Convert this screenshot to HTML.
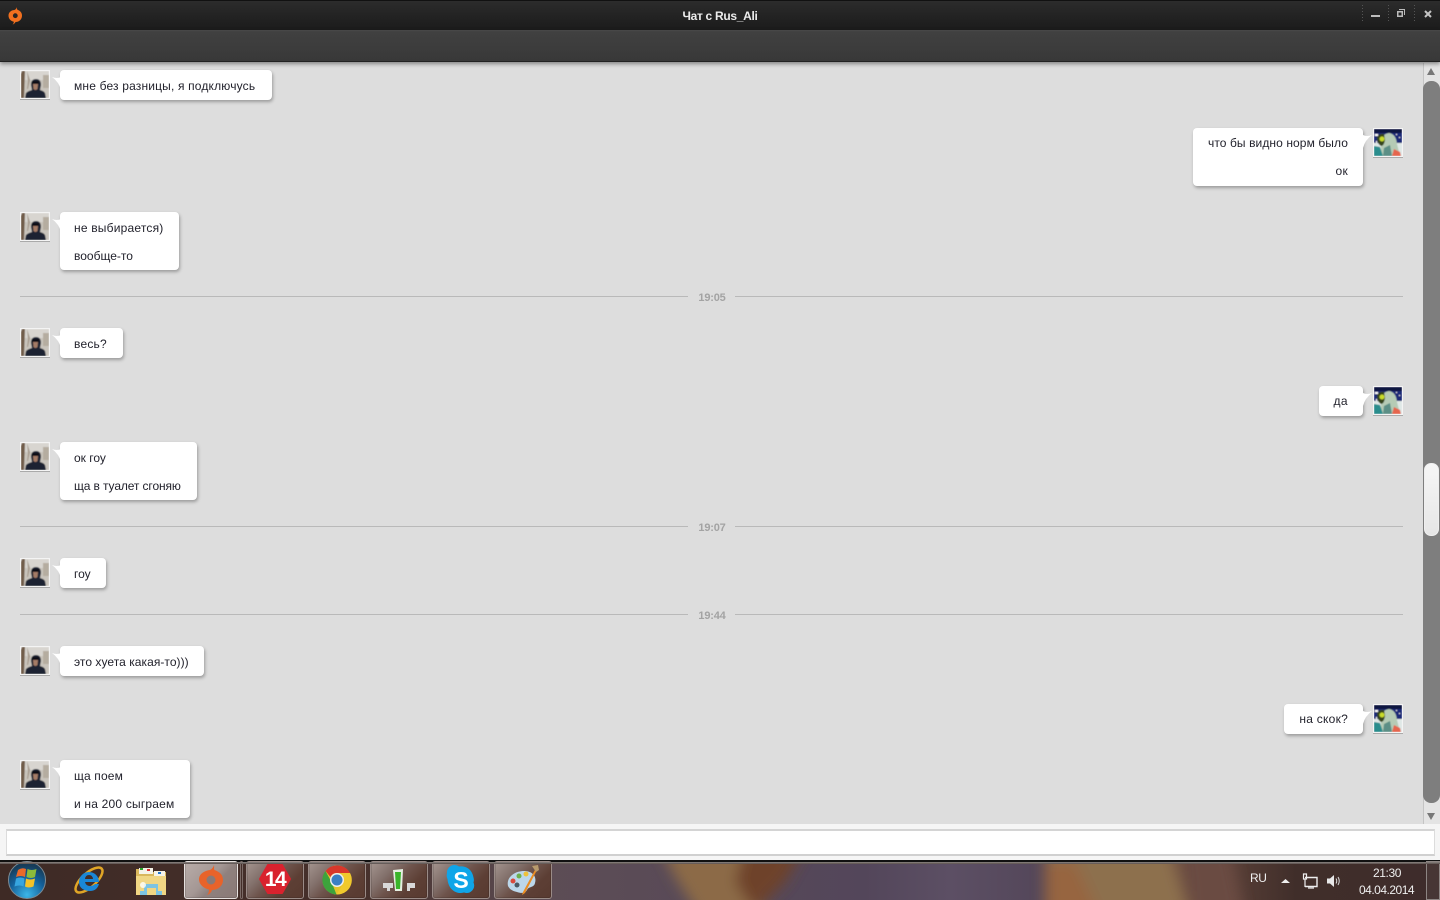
<!DOCTYPE html>
<html lang="ru"><head><meta charset="utf-8"><title>Чат с Rus_Ali</title>
<style>
html,body{margin:0;padding:0;width:1440px;height:900px;overflow:hidden;background:#dddddd;font-family:"Liberation Sans",Arial,sans-serif}
*{box-sizing:border-box}
.a{position:absolute}
#title{left:0;top:0;width:1440px;height:30px;background:linear-gradient(#2c2c2c 0,#2a2a2a 10%,#1b1b1b 100%);border-top:1px solid #111}
#ttl{left:0;width:1440px;top:9px;text-align:center;color:#ececec;font-size:12px;font-weight:bold;line-height:14px;letter-spacing:-.3px}
#tool{left:0;top:30px;width:1440px;height:32px;background:linear-gradient(#4a4a4a 0,#404040 2px,#3c3c3c 60%,#383838 100%);border-bottom:1px solid #222;box-shadow:0 2px 4px rgba(0,0,0,.4);z-index:5}
.dot{top:5px;width:1px;height:17px;background:repeating-linear-gradient(#555 0,#555 1px,transparent 1px,transparent 3px)}
.b{position:absolute;background:#fff;border-radius:4px;box-shadow:1px 2px 3px rgba(0,0,0,.3);font-size:12px;color:#22222c;line-height:14px}
.b div{position:absolute;white-space:nowrap}
.l div{left:14px}
.r div{right:15px}
.av{position:absolute;width:30px;height:30px;padding:1px 1px 0;background:#f4f4f4;box-shadow:inset 0 -1px 0 #aaa;overflow:hidden}
.av svg{display:block}
.tail{position:absolute;width:11px;height:18px;z-index:1}
.ln{position:absolute;height:1px;background:#b9b9b9}
.tm{position:absolute;left:690px;width:44px;text-align:center;font-size:11px;font-weight:bold;color:#a3a3a3;line-height:13px;letter-spacing:-.2px}
#tb{left:0;top:860px;width:1440px;height:40px;border-top:2px solid #111;overflow:hidden;background:#3f2c27}
#tb:before{content:"";position:absolute;left:0;top:0;width:1440px;height:2px;background:linear-gradient(#8c8683,#5a4e4b);z-index:2}
.tbtn{position:absolute;top:861px;height:38px;border:1px solid #9a8b87;border-radius:3px;background:linear-gradient(135deg,#a4958f 0,#82706b 30%,#6e544c 48%,#5d3f35 70%,#583a30 100%);box-shadow:inset 0 0 0 1px rgba(0,0,0,.12)}
.tbtn svg,.ic{position:absolute}
.tx{position:absolute;color:#efefef;font-size:12px;line-height:14px;white-space:nowrap;letter-spacing:-.4px}
</style></head><body>
<svg width="0" height="0" style="position:absolute"><defs>
<filter id="bl"><feGaussianBlur stdDeviation=".45"/></filter>
<symbol id="g" viewBox="0 0 28 27" preserveAspectRatio="none"><g filter="url(#bl)">
<rect width="28" height="27" fill="#c9c4bc"/><rect width="28" height="9" fill="#d8d5d0"/>
<path d="M1 0h3L3 27H0V3z" fill="#6f5b48"/><path d="M6 0l1 10-1 8h1l2-9z" fill="#a59a8c"/><rect x="22" y="4" width="6" height="13" fill="#b5ada0"/>
<path d="M4 27l1-5q2-2 6-3l-1-5q0-6 5-6 5 0 5 6l-1 5q4 1 5 3l1 5z" fill="#1d2433"/>
<path d="M12 13q2-2 5 0l-.5 5q-2 2-4 0z" fill="#a57c66"/><rect x="11" y="10" width="7" height="3" fill="#0f1119"/>
</g></symbol>
<symbol id="m" viewBox="0 0 28 27" preserveAspectRatio="none"><g filter="url(#bl)">
<rect width="28" height="27" fill="#1d2a78"/><rect width="28" height="4" fill="#0e1440"/>
<path d="M0 14h28v13H0z" fill="#dfe8e6"/><path d="M7 27V12q1-7 8-8 7 1 8 11l3 12z" fill="#b5cbb5"/>
<path d="M3 8q3-4 7-3l1 6q-1 6-4 6-4-2-4-9z" fill="#36451a"/><circle cx="8" cy="10" r="2.500" fill="#c8dc2a"/>
<path d="M0 17l6 1 3 9H0z" fill="#2b8d8d"/><path d="M20 20l6 3 1 4h-9z" fill="#e5654d"/><path d="M10 19l6-3 2 11H9z" fill="#5b8f86"/>
<rect x="1" y="5" width="3" height="2" fill="#fff"/><rect x="22" y="5" width="1" height="1" fill="#fff"/><rect x="25" y="8" width="1" height="1" fill="#fff"/><rect x="2" y="12" width="1" height="2" fill="#fff"/>
</g></symbol>
</defs></svg>

<div class="a" id="title"></div>
<svg class="ic" style="left:7px;top:6px;z-index:6" width="16" height="19" viewBox="0 0 16 19"><path d="M10 1c0 1.500-.2 2 .5 2.800C13.500 5 15 7 15 9.700c0 3.600-3 6.300-6.500 6.300-.5 1.200-1.500 2-3 2.500 1-.8 1.300-1.600 1.300-2.700C3.500 15 1.500 12.500 1.500 9.500 1.500 5.500 5.500 4 7.500 4 8.700 3.500 9.700 2.300 10 1z" fill="#f2701f"/><circle cx="8.300" cy="9.700" r="2.400" fill="#2a2420"/></svg>
<div class="a" id="ttl">Чат с Rus_Ali</div>
<div class="a dot" style="left:1362px"></div><div class="a dot" style="left:1388px"></div><div class="a dot" style="left:1414px"></div>
<div class="a" style="left:1371px;top:15px;width:9px;height:2px;background:#bdbdbd"></div>
<svg class="ic" style="left:1397px;top:9px" width="8" height="8" viewBox="0 0 8 8"><path d="M2 0h6v6H7V1H2z" fill="#bbb"/><path d="M0 2h6v6H0zM1.500 3.500v3h3v-3z" fill="#bbb" fill-rule="evenodd"/></svg>
<svg class="ic" style="left:1424px;top:10px" width="8" height="8" viewBox="0 0 8 8"><path d="M1 1l6 6M7 1L1 7" stroke="#c4c4c4" stroke-width="2"/></svg>
<div class="a" id="tool"></div>

<div class="av" style="left:20px;top:70px"><svg width="28" height="27"><use href="#g"/></svg></div>
<svg class="tail" style="left:50px;top:74px" viewBox="0 0 11 18"><path d="M2 3Q7 5 11 3V16Q9 8 2 3z" fill="#fff"/></svg>
<div class="b l" style="left:60px;top:70px;width:212px;height:30px"><div style="top:9px;letter-spacing:.17px">мне без разницы, я подключусь</div></div>

<div class="b r" style="left:1193px;top:128px;width:170px;height:58px"><div style="top:8px;letter-spacing:.09px">что бы видно норм было</div><div style="top:36px;letter-spacing:.3px">ок</div></div>
<svg class="tail" style="left:1363px;top:132px" viewBox="0 0 11 18"><path d="M9 3Q4 5 0 3V16Q2 8 9 3z" fill="#fff"/></svg>
<div class="av" style="left:1373px;top:128px"><svg width="28" height="27"><use href="#m"/></svg></div>

<div class="av" style="left:20px;top:212px"><svg width="28" height="27"><use href="#g"/></svg></div>
<svg class="tail" style="left:50px;top:216px" viewBox="0 0 11 18"><path d="M2 3Q7 5 11 3V16Q9 8 2 3z" fill="#fff"/></svg>
<div class="b l" style="left:60px;top:212px;width:119px;height:58px"><div style="top:9px;letter-spacing:.2px">не выбирается)</div><div style="top:37px">вообще-то</div></div>

<div class="ln" style="left:20px;top:296px;width:668px"></div><div class="tm" style="top:292px">19:05</div><div class="ln" style="left:735px;top:296px;width:668px"></div>

<div class="av" style="left:20px;top:328px"><svg width="28" height="27"><use href="#g"/></svg></div>
<svg class="tail" style="left:50px;top:332px" viewBox="0 0 11 18"><path d="M2 3Q7 5 11 3V16Q9 8 2 3z" fill="#fff"/></svg>
<div class="b l" style="left:60px;top:328px;width:63px;height:30px"><div style="top:9px;letter-spacing:.2px">весь?</div></div>

<div class="b r" style="left:1319px;top:386px;width:44px;height:30px"><div style="top:8px;letter-spacing:.4px">да</div></div>
<svg class="tail" style="left:1363px;top:390px" viewBox="0 0 11 18"><path d="M9 3Q4 5 0 3V16Q2 8 9 3z" fill="#fff"/></svg>
<div class="av" style="left:1373px;top:386px"><svg width="28" height="27"><use href="#m"/></svg></div>

<div class="av" style="left:20px;top:442px"><svg width="28" height="27"><use href="#g"/></svg></div>
<svg class="tail" style="left:50px;top:446px" viewBox="0 0 11 18"><path d="M2 3Q7 5 11 3V16Q9 8 2 3z" fill="#fff"/></svg>
<div class="b l" style="left:60px;top:442px;width:137px;height:58px"><div style="top:9px">ок гоу</div><div style="top:37px;letter-spacing:-.11px">ща в туалет сгоняю</div></div>

<div class="ln" style="left:20px;top:526px;width:668px"></div><div class="tm" style="top:522px">19:07</div><div class="ln" style="left:735px;top:526px;width:668px"></div>

<div class="av" style="left:20px;top:558px"><svg width="28" height="27"><use href="#g"/></svg></div>
<svg class="tail" style="left:50px;top:562px" viewBox="0 0 11 18"><path d="M2 3Q7 5 11 3V16Q9 8 2 3z" fill="#fff"/></svg>
<div class="b l" style="left:60px;top:558px;width:46px;height:30px"><div style="top:9px">гоу</div></div>

<div class="ln" style="left:20px;top:614px;width:668px"></div><div class="tm" style="top:610px">19:44</div><div class="ln" style="left:735px;top:614px;width:668px"></div>

<div class="av" style="left:20px;top:646px"><svg width="28" height="27"><use href="#g"/></svg></div>
<svg class="tail" style="left:50px;top:650px" viewBox="0 0 11 18"><path d="M2 3Q7 5 11 3V16Q9 8 2 3z" fill="#fff"/></svg>
<div class="b l" style="left:60px;top:646px;width:144px;height:30px"><div style="top:9px;letter-spacing:.05px">это хуета какая-то)))</div></div>

<div class="b r" style="left:1284px;top:704px;width:79px;height:30px"><div style="top:8px;letter-spacing:.25px">на скок?</div></div>
<svg class="tail" style="left:1363px;top:708px" viewBox="0 0 11 18"><path d="M9 3Q4 5 0 3V16Q2 8 9 3z" fill="#fff"/></svg>
<div class="av" style="left:1373px;top:704px"><svg width="28" height="27"><use href="#m"/></svg></div>

<div class="av" style="left:20px;top:760px"><svg width="28" height="27"><use href="#g"/></svg></div>
<svg class="tail" style="left:50px;top:764px" viewBox="0 0 11 18"><path d="M2 3Q7 5 11 3V16Q9 8 2 3z" fill="#fff"/></svg>
<div class="b l" style="left:60px;top:760px;width:130px;height:58px"><div style="top:9px;letter-spacing:.14px">ща поем</div><div style="top:37px;letter-spacing:.2px">и на 200 сыграем</div></div>

<!-- scrollbar -->
<div class="a" style="left:1423px;top:63px;width:17px;height:761px;background:#e4e4e4;border-left:1px solid #c4c4c4"></div>
<svg class="ic" style="left:1427px;top:68px" width="8" height="7"><path d="M4 0l4 7H0z" fill="#777"/></svg>
<svg class="ic" style="left:1427px;top:813px" width="8" height="7"><path d="M4 7l4-7H0z" fill="#777"/></svg>
<div class="a" style="left:1423px;top:81px;width:17px;height:722px;background:#7e7e7e;border-radius:8px"></div>
<div class="a" style="left:1424px;top:463px;width:15px;height:73px;background:linear-gradient(#f6f6f6,#e6e6e6);border-radius:7px;border:1px solid #efefef"></div>

<!-- input area -->
<div class="a" style="left:0;top:824px;width:1440px;height:36px;background:#f5f5f5"></div>
<div class="a" style="left:6px;top:829px;width:1429px;height:27px;background:#fff;border:1px solid #dcdcdc;border-top:2px solid #d4d4d4;border-bottom:2px solid #d0d0d0"></div>

<!-- taskbar -->
<div class="a" id="tb">
<svg width="1440" height="38" style="position:absolute;left:0;top:0"><defs><filter id="w" filterUnits="userSpaceOnUse" x="500" y="-40" width="940" height="120"><feGaussianBlur stdDeviation="7"/></filter><linearGradient id="tbbg" x1="0" x2="1"><stop offset="0" stop-color="#3e2a25"/><stop offset=".25" stop-color="#46302b"/><stop offset=".38" stop-color="#5d4d55"/><stop offset=".6" stop-color="#53465a"/><stop offset=".66" stop-color="#5c4f64"/><stop offset=".72" stop-color="#54475a"/><stop offset=".82" stop-color="#6a4b40"/><stop offset=".9" stop-color="#402e2a"/><stop offset="1" stop-color="#3e2c2b"/></linearGradient></defs>
<rect width="1440" height="38" fill="url(#tbbg)"/>
<g filter="url(#w)"><path d="M660 -15h95l-15 30 30 40h-70l-25-40z" fill="#8c6a46"/><path d="M745 -15h60l-20 35-30 30-20-30z" fill="#6e4329"/>
<path d="M1045 -15h125l20 70h-145z" fill="#8d6f4e"/><path d="M1045 0h30l25 55h-55z" fill="#97653f"/><path d="M1180 -15h50l15 70h-55z" fill="#6b4b42"/></g>
</svg>
</div>
<svg class="ic" style="left:8px;top:861px" width="38" height="38" viewBox="0 0 38 38"><defs><radialGradient id="o" cx=".5" cy=".9" r=".8"><stop offset="0" stop-color="#3cb6e8"/><stop offset=".6" stop-color="#14609a"/><stop offset="1" stop-color="#173c58"/></radialGradient></defs><circle cx="19" cy="19" r="18.500" fill="url(#o)" stroke="#7c8a93" stroke-width="1"/><path d="M10 9q4-3 8-1l-1 8q-4-2-9 0z" fill="#ea6a2a"/><path d="M19.500 8q4 2 9 0l-1.500 8q-4 2-8.500 0z" fill="#8cbb3a"/><path d="M8 17.500q4-2 8.500 0l-1 8q-4-2-9 0z" fill="#37a5df"/><path d="M18 17.500q4 2 9 0l-1.500 8q-5 2-8.500 0z" fill="#f5c227"/></svg>
<svg class="ic" style="left:72px;top:863px" width="34" height="34" viewBox="0 0 34 34"><ellipse cx="17" cy="17" rx="17" ry="7" transform="rotate(-42 17 17)" fill="none" stroke="#e0a526" stroke-width="2.500"/><path d="M7 19a10 10 0 1 1 20 0H13q1 4 5 4 3 0 5-2h4q-2 7-9 7C12 28 7 25 7 19zm6-3h8q-.5-4-4-4t-4 4z" fill="#1a87d6" fill-rule="evenodd"/></svg>
<svg class="ic" style="left:134px;top:866px" width="34" height="30" viewBox="0 0 34 30"><path d="M2 3h13l2 3h15v23H2z" fill="#d9b75c"/><rect x="5" y="2" width="14" height="6" fill="#f5f3e8"/><rect x="20" y="5" width="11" height="5" fill="#f5f3e8"/><rect x="6" y="2" width="3" height="2" fill="#2aa52a"/><rect x="13" y="3" width="3" height="2" fill="#d33"/><rect x="24" y="6" width="3" height="2" fill="#2277cc"/><path d="M2 10h30v19H2z" fill="#f0d684"/><path d="M10 25v-7h14v7h4v4h-6v-7H13v7H6v-4z" fill="#7cc3e2"/><circle cx="9" cy="19" r="3" fill="#fff" opacity=".8"/></svg>
<div class="tbtn" style="left:184px;width:54px;background:linear-gradient(135deg,#b9ada9 0,#a49794 45%,#8f817e 60%,#8a7976 100%);border-color:#e6e0de"></div>
<div class="a" style="left:240px;top:861px;width:3px;height:38px;border:1px solid #7a6a66;border-radius:2px"></div>
<svg class="ic" style="left:198px;top:864px" width="26" height="32" viewBox="0 0 26 32"><path d="M16 1c.5 2.500-.5 3.500.5 5C22 8 25 11 25 16c0 6-5 10-11 10-.5 2-2 4-5 5 1.500-1.500 2-3 2-5.500C5 24 1 20 1 15.500 1 9 8 6.500 12 6c2-1 3.500-3 4-5z" fill="#e8632a"/><circle cx="13" cy="16" r="4.500" fill="#8a7976"/></svg>
<div class="tbtn" style="left:246px;width:58px"></div>
<svg class="ic" style="left:259px;top:864px" width="32" height="30" viewBox="0 0 32 30"><path d="M9 1h14l8 14-8 14H9L1 15z" fill="#d9222e" stroke="#d9222e" stroke-linejoin="round" stroke-width="2"/><text x="16" y="22" text-anchor="middle" font-family="Liberation Sans" font-weight="bold" font-size="21" letter-spacing="-1.500" fill="#fff">14</text></svg>
<div class="tbtn" style="left:308px;width:58px"></div>
<svg class="ic" style="left:322px;top:865px" width="30" height="30" viewBox="0 0 30 30"><circle cx="15" cy="15" r="14.500" fill="#e2c32b"/><path d="M15 .5A14.500 14.500 0 0 1 28 8H15a7 7 0 0 0-6.500 4L3.500 6A14.500 14.500 0 0 1 15 .5z" fill="#d8372b"/><path d="M3.500 6l6 11 5 12.500A14.500 14.500 0 0 1 3.500 6z" fill="#3da33c"/><path d="M21 19l-6.500 10.500A14.500 14.500 0 0 0 28 8h-8z" fill="#f0c92d"/><circle cx="15" cy="15" r="7" fill="#eee"/><circle cx="15" cy="15" r="5.500" fill="#3a7fc4"/></svg>
<div class="tbtn" style="left:370px;width:58px"></div>
<svg class="ic" style="left:382px;top:866px" width="34" height="28" viewBox="0 0 34 28"><path d="M11 4l10-1-1 22h-7z" fill="#e5efe1"/><path d="M13 6h6l-1 17h-4z" fill="#39b52a"/><path d="M1 17h10v5H8v3H5v-3H1z" fill="#d8d8d8"/><path d="M23 17h10v5h-5v3h-3v-8z" fill="#d8d8d8"/></svg>
<div class="tbtn" style="left:432px;width:58px"></div>
<svg class="ic" style="left:446px;top:864px" width="30" height="32" viewBox="0 0 30 32"><path d="M8 1a7 7 0 0 1 5 1.500c6-1 13 2 14.500 11 .5 2 .5 3 0 5a7.500 7.500 0 0 1-9.500 10C9 31 2 24 1.500 15 .5 13 .5 11 1 9a7.500 7.500 0 0 1 7-8z" fill="#0fa5e8"/><text x="15" y="24" text-anchor="middle" font-family="Liberation Sans" font-weight="bold" font-size="23" fill="#fff">S</text></svg>
<div class="tbtn" style="left:494px;width:58px"></div>
<svg class="ic" style="left:506px;top:864px" width="34" height="32" viewBox="0 0 34 32"><path d="M2 22C0 14 8 7 18 7c8 0 13 5 11 12-1 5-6 3-8 7-2 4-7 3-10 2-4-1-7-2-9-6z" fill="#bcd7ea"/><circle cx="7" cy="17" r="2.500" fill="#d94a3c"/><circle cx="13" cy="12" r="2.500" fill="#6ab04c"/><circle cx="20" cy="10" r="2.500" fill="#eec23a"/><circle cx="11" cy="21" r="2.500" fill="#4a5a66"/><path d="M30 4L17 28l-1 3 3-2L31 6z" fill="#ea8d23"/><path d="M26 2l6-1 1 5-3 2z" fill="#b89a6c"/></svg>

<div class="tx" style="left:1250px;top:871px">RU</div>
<svg class="ic" style="left:1281px;top:878px" width="9" height="6"><path d="M4.500 1L9 5H0z" fill="#eee"/></svg>
<svg class="ic" style="left:1302px;top:873px" width="16" height="16" viewBox="0 0 16 16"><path d="M3 4.500h12v9H3" fill="none" stroke="#eee" stroke-width="1.400"/><path d="M1.500 1v5h3V1zM3 6v8M6 15h6" stroke="#eee" stroke-width="1.200" fill="none"/></svg>
<svg class="ic" style="left:1326px;top:873px" width="16" height="16" viewBox="0 0 16 16"><path d="M1 5.500h3L8 2v12L4 10.500H1z" fill="#e8e8e8"/><path d="M10 5.500q1.500 2.500 0 5M12 4q2.500 4 0 8" stroke="#ddd" fill="none"/></svg>
<div class="tx" style="left:1373px;top:866px">21:30</div>
<div class="tx" style="left:1359px;top:883px;letter-spacing:-.5px">04.04.2014</div>
<div class="a" style="left:1426px;top:861px;width:14px;height:39px;border:1px solid #8d8583;background:rgba(255,255,255,.05)"></div>
</body></html>
